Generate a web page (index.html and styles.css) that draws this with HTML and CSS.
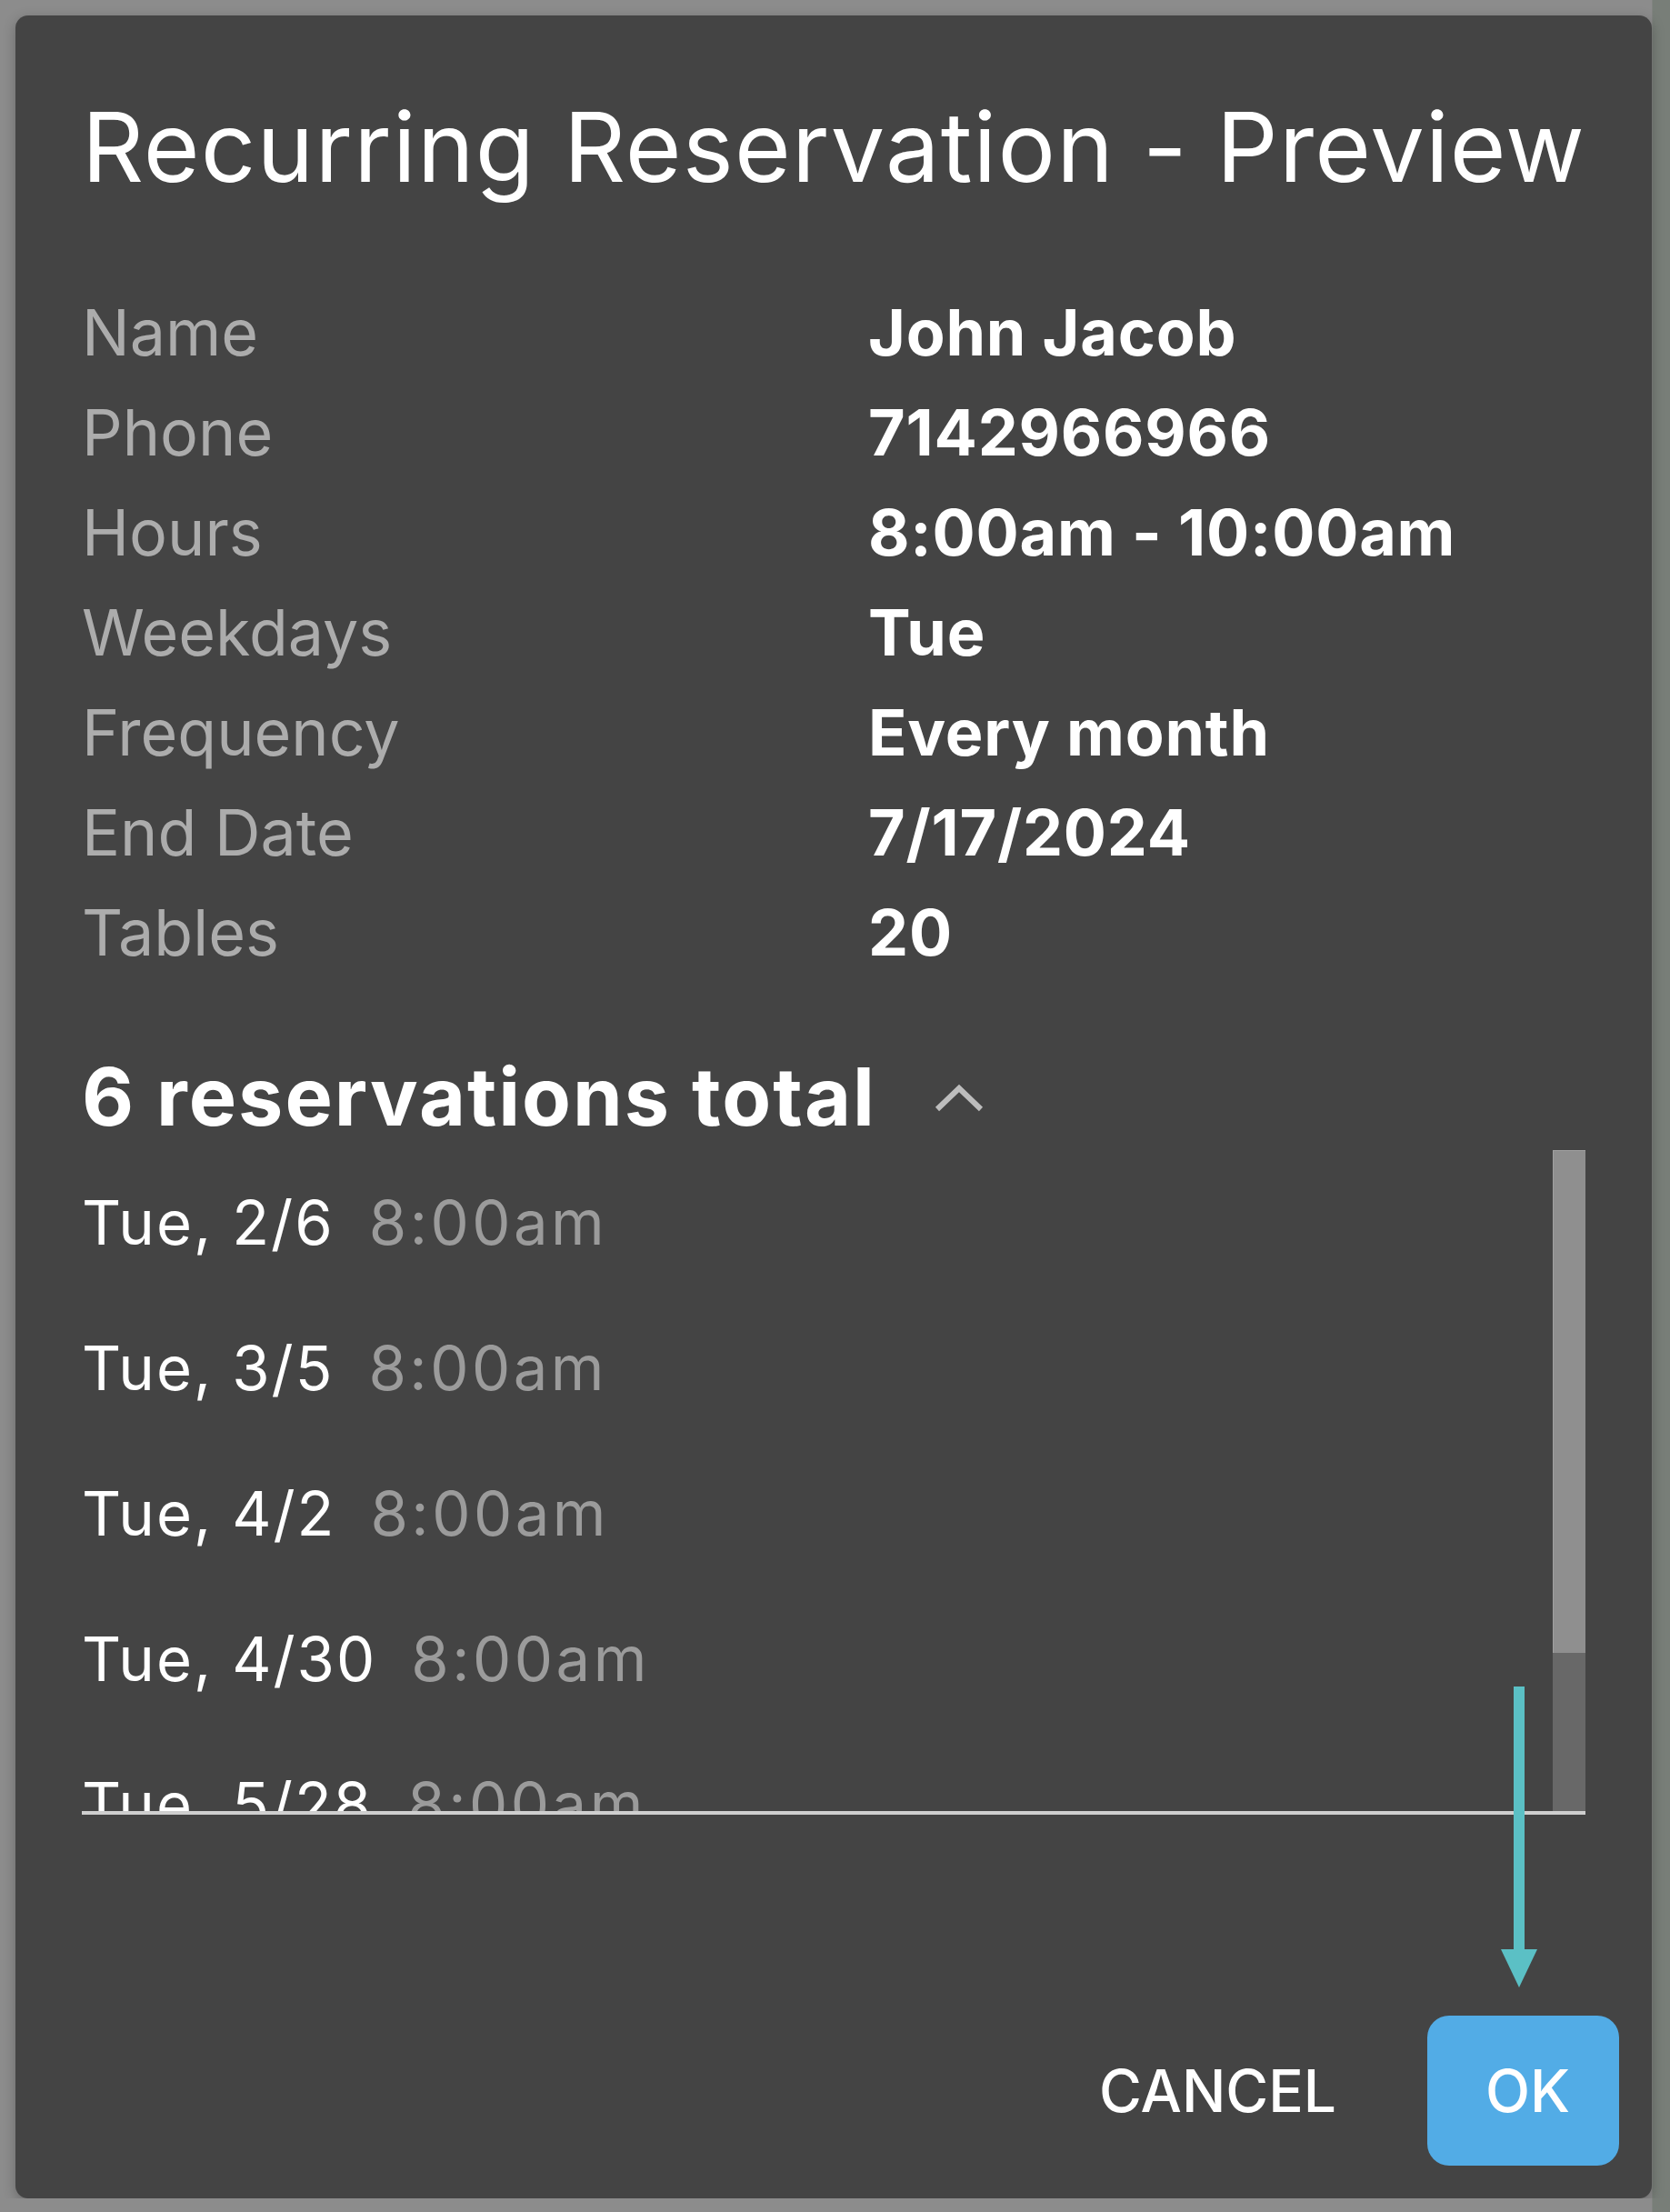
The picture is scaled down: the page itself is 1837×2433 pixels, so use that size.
FILE: index.html
```html
<!DOCTYPE html>
<html>
  <head>
    <title>Recurring Reservation - Preview</title>
    <link rel="stylesheet" href="styles.css">
  </head>
<body>
  <div class="dialog">
    <div class="dialog-body">
      <p class="title">Recurring Reservation - Preview</p>

      <div class="details">
        <span class="label">Name</span><span class="value">John Jacob</span>
        <span class="label">Phone</span><span class="value">7142966966</span>
        <span class="label">Hours</span><span class="value">8:00am - 10:00am</span>
        <span class="label">Weekdays</span><span class="value">Tue</span>
        <span class="label">Frequency</span><span class="value">Every month</span>
        <span class="label">End Date</span><span class="value">7/17/2024</span>
        <span class="label">Tables</span><span class="value">20</span>
      </div>

      <p class="total">
        6 reservations total
        <svg class="chevron" width="56" height="32" viewBox="0 0 56 32">
          <polyline points="4,28 28,5 52,28" fill="none" stroke="#bdbdbd" stroke-width="6"/>
        </svg>
      </p>

      <div class="preview">
        <ul class="res-list">
          <li><span class="res-date">Tue, 2/6</span><span class="res-time">8:00am</span></li>
          <li><span class="res-date">Tue, 3/5</span><span class="res-time">8:00am</span></li>
          <li><span class="res-date">Tue, 4/2</span><span class="res-time">8:00am</span></li>
          <li><span class="res-date">Tue, 4/30</span><span class="res-time">8:00am</span></li>
          <li><span class="res-date">Tue, 5/28</span><span class="res-time">8:00am</span></li>
          <li><span class="res-date">Tue, 6/25</span><span class="res-time">8:00am</span></li>
        </ul>
        <div class="scrollbar">
          <div class="thumb"></div>
        </div>
      </div>
    </div>

    <div class="dialog-actions">
      <button class="text-button">CANCEL</button>
      <button class="ok-button">OK</button>
    </div>

    <!-- annotation arrow pointing at OK -->
    <svg class="pointer" width="40" height="331" viewBox="0 0 40 331">
      <rect x="14" y="0" width="12" height="292" fill="#5bc0c5"/>
      <polygon points="0,289 40,289 20,331" fill="#5bc0c5"/>
    </svg>
  </div>
</body>
</html>
```

FILE: styles.css
```css
body{
  margin: 0;
  background: linear-gradient(to right, #8c8c8c 1817px, #787e78 1817px);
  font-family: Inter, "Noto Sans", Arial, sans-serif;
}
.dialog{
  position: relative;
  box-sizing: border-box;
  width: 1800px;
  height: 2401px;
  margin: 17px 0 0 17px;
  background-color: #444444;
  border-radius: 14px;
  box-shadow: 0 4px 14px rgba(0, 0, 0, 0.25);
  display: flex;
  flex-direction: column;
}
.dialog-body{
  padding: 81px 73px 0 73px;
}
.title{
  margin: 0;
  font-size: 106px;
  line-height: 127px;
  font-weight: 400;
  color: #ffffff;
  letter-spacing: 1.2px;
  white-space: nowrap;
}
.details{
  margin-top: 86px;
  display: grid;
  grid-template-columns: 865px 1fr;
  font-size: 70px;
  line-height: 110px;
}
.label{
  color: #acacac;
}
.value{
  color: #ffffff;
  font-weight: 700;
  letter-spacing: 0.8px;
}
.total{
  margin: 70px 0 0 0;
  font-size: 88px;
  line-height: 110px;
  font-weight: 700;
  color: #ffffff;
  letter-spacing: 2px;
}
.chevron{
  margin-left: 40px;
  vertical-align: 14px;
}
.preview{
  margin-top: 4px;
  height: 727px;
  display: flex;
  border-bottom: 4px solid #cfcfcf;
}
.res-list{
  flex: 1;
  margin: 0;
  padding: 0;
  list-style: none;
  overflow: hidden;
  font-size: 67px;
  line-height: 160px;
  letter-spacing: 2px;
}
.res-date{
  color: #ffffff;
}
.res-time{
  color: #9b9b9b;
  margin-left: 38px;
  letter-spacing: 3.5px;
}
.scrollbar{
  width: 36px;
  background-color: #686868;
}
.thumb{
  height: 552px;
  background-color: #8f8f8f;
  border-top: 1px solid #a0a0a0;
  border-left: 1px solid #a0a0a0;
}
.dialog-actions{
  margin-top: auto;
  padding: 0 36px 36px 0;
  display: flex;
  justify-content: flex-end;
  gap: 36px;
}
.text-button, .ok-button{
  height: 165px;
  padding: 0 64px;
  border: none;
  font-family: Inter, "Noto Sans", Arial, sans-serif;
  font-size: 64px;
  font-weight: 500;
  color: #ffffff;
  cursor: pointer;
}
.text-button{
  background-color: transparent;
}
.ok-button{
  width: 211px;
  background-color: #52ace6;
  border-radius: 24px;
}
.pointer{
  position: absolute;
  left: 1634px;
  top: 1838px;
}
```
